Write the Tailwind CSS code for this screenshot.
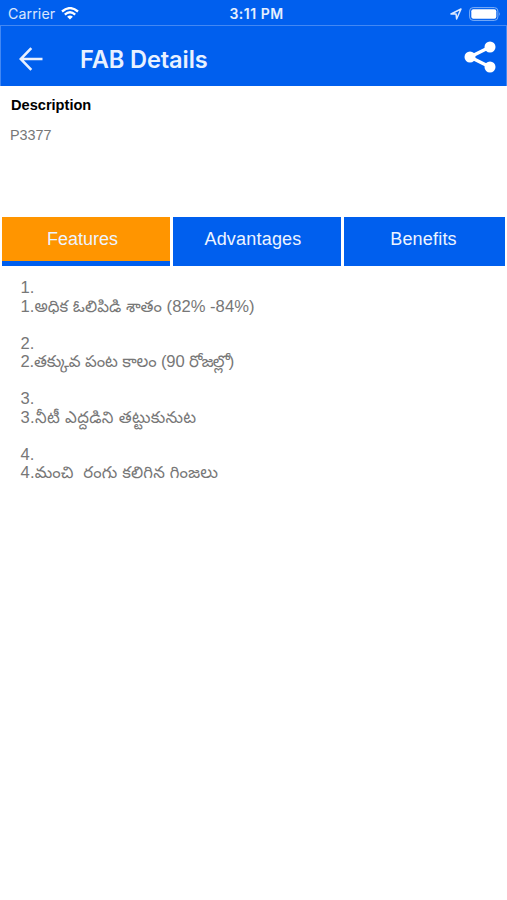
<!DOCTYPE html>
<html lang="te">
<head>
<meta charset="utf-8">
<title>FAB Details</title>
<script src="https://cdn.jsdelivr.net/npm/@tailwindcss/browser@4"></script>
</head>
<body class="bg-white w-[507px] h-[900px] overflow-hidden font-['Liberation_Sans','Noto_Sans_Telugu',sans-serif]">
<header class="bg-[#005fee] text-white font-['Inter',sans-serif]">
  <div class="h-[25px] grid grid-cols-3 items-center pl-2 pr-[6px] pt-[3px] leading-none">
    <div class="flex items-center gap-[6px]">
      <span class="text-[14.2px] tracking-[0.1px] text-white/85">Carrier</span>
      <svg class="w-[18px] h-[13px]" viewBox="0 0 18 13" fill="none" stroke="#fff" stroke-width="2.3"><path d="M1 4.5Q9-2.3 17 4.5M3.8 7.6Q9 3 14.2 7.6"/><path d="M9 12.6 6.1 9.7Q9 7.3 11.9 9.7Z" fill="#fff" stroke="none"/></svg>
    </div>
    <span class="text-center pl-[4px] text-[14px] tracking-[0.5px] font-semibold text-white/90 whitespace-nowrap">3:11 PM</span>
    <div class="flex items-center justify-end gap-[7px]">
      <svg class="w-3 h-3" viewBox="0 0 12 12" fill="none" stroke="#dce9ff" stroke-width="1.5" stroke-linejoin="round"><path d="M1 6 11 1 6.6 11 6.1 6.1Z"/></svg>
      <svg class="w-8 h-[14px]" viewBox="0 0 32 14" fill="none"><rect x=".6" y=".6" width="28.3" height="12.8" rx="3.5" stroke="#7fb0f7"/><rect x="2.3" y="2.3" width="25" height="9.4" rx="2" fill="#fff"/><path d="M30.3 5q1.5 2 0 4Z" fill="#8fb9f8"/></svg>
    </div>
  </div>
  <div class="h-[61px] border-t border-x border-[#4388f3] flex items-center pl-[18px] pr-[10px]">
    <svg class="w-6 h-6 mt-[5px]" viewBox="0 0 24 24" fill="none" stroke="#e8f0ff" stroke-width="2.6"><path d="M23.5 12H2M12.3 1.2 1.7 12l10.6 10.8"/></svg>
    <h1 class="ml-[37px] mt-[7px] text-[23.6px] font-semibold leading-none tracking-[-0.1px] text-[#e8f1ff] flex-1">FAB Details</h1>
    <svg class="w-8 h-8 mt-[2px]" viewBox="0 0 32 32" fill="#fff" stroke="#fff"><path d="M26 6 6 16l20 10" fill="none" stroke-width="3.4"/><circle cx="26" cy="6" r="5.5" stroke="none"/><circle cx="6" cy="16" r="5.5" stroke="none"/><circle cx="26" cy="26" r="5.5" stroke="none"/></svg>
  </div>
</header>
<section class="h-[131px] pt-[10px] pl-[10px]">
  <h2 class="text-[14.6px] leading-[18px] font-bold text-black pl-px">Description</h2>
  <p class="mt-[12px] text-[14.4px] leading-[18px] text-[#777]">P3377</p>
</section>
<nav class="flex gap-[3px] px-[2px] h-[49px] text-[18px] leading-[44px] text-center text-[#edf4ff]">
  <div class="w-[168px] bg-[#ff9500] border-b-[5px] border-[#005fee] pr-[7px]">Features</div>
  <div class="w-[168px] bg-[#005fee] pr-[8px] tracking-[0.2px]">Advantages</div>
  <div class="flex-1 bg-[#005fee] pr-[2px] tracking-[0.2px]">Benefits</div>
</nav>
<main class="pl-[20.5px] pt-[13px] text-[16.6px] leading-[18.5px] text-[#777]">
  <div class="h-[55.5px] whitespace-nowrap"><p>1.</p><p class="tracking-[0.03px]">1.అధిక ఓలిపిడి శాతం (82% -84%)</p></div>
  <div class="h-[55.5px] whitespace-nowrap"><p>2.</p><p class="tracking-[-0.14px]">2.తక్కువ పంట కాలం (90 <span class="tracking-[-0.9px]">రోజల్లో)</span></p></div>
  <div class="h-[55.5px] whitespace-nowrap"><p>3.</p><p class="tracking-[0.32px]">3.నీటీ ఎద్దడిని తట్టుకునుట</p></div>
  <div class="h-[55.5px] whitespace-pre"><p>4.</p><p class="tracking-[0.18px]">4.మంచి  రంగు కలిగిన గింజలు</p></div>
</main>
</body>
</html>
